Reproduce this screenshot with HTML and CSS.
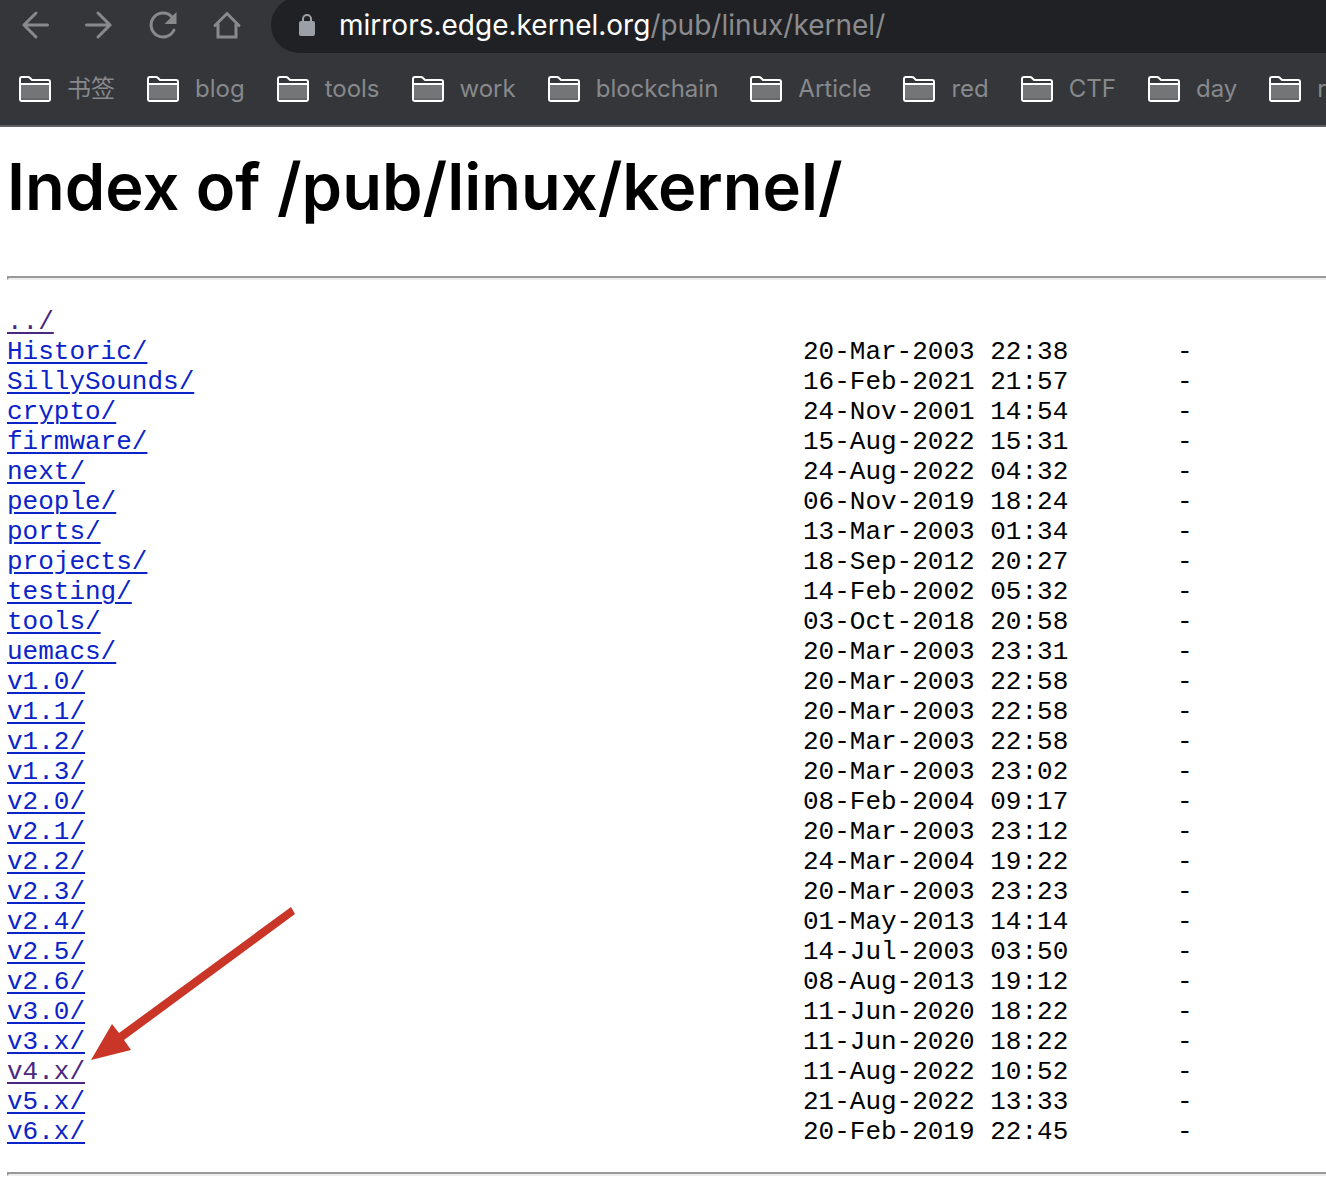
FILE: index.html
```html
<!DOCTYPE html>
<html lang="en">
<head>
<meta charset="utf-8">
<title>Index of /pub/linux/kernel/</title>
<link rel="stylesheet" href="styles.css">
</head>
<body>
<svg class="sprite" aria-hidden="true">
  <symbol id="folder" viewBox="0 0 32 26">
    <path d="M1 8V3Q1 1 3 1H9Q10 1 11 2L13 4H29Q31 4 31 6V8Z" fill="#35363a" stroke="#fff" stroke-width="2"/>
    <path d="M1 8H31V23Q31 25 29 25H3Q1 25 1 23Z" fill="#747577" stroke="#fff" stroke-width="2"/>
    <path d="M2 22H30V24H2Z" fill="#666769"/>
  </symbol>
</svg>
<header class="browser">
  <div class="toolbar">
    <nav class="controls" aria-label="Browser">
      <button class="control" type="button" aria-label="Back"><svg viewBox="0 0 32 32"><path d="M28.500 16H5M17 4L5 16L17 28"/></svg></button>
      <button class="control" type="button" aria-label="Forward"><svg viewBox="0 0 32 32"><path d="M3.500 16H27M15 4L27 16L15 28"/></svg></button>
      <button class="control" type="button" aria-label="Reload"><svg viewBox="0 0 32 32"><path d="M27 21A12 12 0 1 1 25 8"/><path class="solid" d="M29.500 3V15H17.500Z"/></svg></button>
      <button class="control" type="button" aria-label="Home"><svg viewBox="0 0 32 32"><path d="M4 16.500L16 4.500L28 16.500M7 15V28H25V15"/></svg></button>
    </nav>
    <div class="omnibox">
      <svg class="lock" viewBox="0 0 16 22" aria-hidden="true"><rect y="7" width="16" height="15" rx="2"/><path d="M4 8V5A4 4 0 0 1 12 5V8"/></svg>
      <div class="url" role="textbox" contenteditable="true" spellcheck="false" aria-label="Address">mirrors.edge.kernel.org<span class="path">/pub/linux/kernel/</span></div>
    </div>
  </div>
  <nav class="bookmarks" aria-label="Bookmarks">
    <a class="bookmark" href="#"><svg><use href="#folder"/></svg>书签</a>
    <a class="bookmark" href="#"><svg><use href="#folder"/></svg>blog</a>
    <a class="bookmark" href="#"><svg><use href="#folder"/></svg>tools</a>
    <a class="bookmark" href="#"><svg><use href="#folder"/></svg>work</a>
    <a class="bookmark" href="#"><svg><use href="#folder"/></svg>blockchain</a>
    <a class="bookmark" href="#"><svg><use href="#folder"/></svg>Article</a>
    <a class="bookmark" href="#"><svg><use href="#folder"/></svg>red</a>
    <a class="bookmark" href="#"><svg><use href="#folder"/></svg>CTF</a>
    <a class="bookmark" href="#"><svg><use href="#folder"/></svg>day</a>
    <a class="bookmark" href="#"><svg><use href="#folder"/></svg>r</a>
  </nav>
</header>
<main class="page">
  <h1>Index of /pub/linux/kernel/</h1>
  <hr>
  <div class="listing">
    <table>
      <colgroup><col class="name"><col class="date"><col></colgroup>
      <tbody>
        <tr><td><a class="visited" href="#">../</a></td><td></td><td></td></tr>
        <tr><td><a href="#">Historic/</a></td><td>20-Mar-2003 22:38</td><td>-</td></tr>
        <tr><td><a href="#">SillySounds/</a></td><td>16-Feb-2021 21:57</td><td>-</td></tr>
        <tr><td><a href="#">crypto/</a></td><td>24-Nov-2001 14:54</td><td>-</td></tr>
        <tr><td><a href="#">firmware/</a></td><td>15-Aug-2022 15:31</td><td>-</td></tr>
        <tr><td><a href="#">next/</a></td><td>24-Aug-2022 04:32</td><td>-</td></tr>
        <tr><td><a href="#">people/</a></td><td>06-Nov-2019 18:24</td><td>-</td></tr>
        <tr><td><a href="#">ports/</a></td><td>13-Mar-2003 01:34</td><td>-</td></tr>
        <tr><td><a href="#">projects/</a></td><td>18-Sep-2012 20:27</td><td>-</td></tr>
        <tr><td><a href="#">testing/</a></td><td>14-Feb-2002 05:32</td><td>-</td></tr>
        <tr><td><a href="#">tools/</a></td><td>03-Oct-2018 20:58</td><td>-</td></tr>
        <tr><td><a href="#">uemacs/</a></td><td>20-Mar-2003 23:31</td><td>-</td></tr>
        <tr><td><a href="#">v1.0/</a></td><td>20-Mar-2003 22:58</td><td>-</td></tr>
        <tr><td><a href="#">v1.1/</a></td><td>20-Mar-2003 22:58</td><td>-</td></tr>
        <tr><td><a href="#">v1.2/</a></td><td>20-Mar-2003 22:58</td><td>-</td></tr>
        <tr><td><a href="#">v1.3/</a></td><td>20-Mar-2003 23:02</td><td>-</td></tr>
        <tr><td><a href="#">v2.0/</a></td><td>08-Feb-2004 09:17</td><td>-</td></tr>
        <tr><td><a href="#">v2.1/</a></td><td>20-Mar-2003 23:12</td><td>-</td></tr>
        <tr><td><a href="#">v2.2/</a></td><td>24-Mar-2004 19:22</td><td>-</td></tr>
        <tr><td><a href="#">v2.3/</a></td><td>20-Mar-2003 23:23</td><td>-</td></tr>
        <tr><td><a href="#">v2.4/</a></td><td>01-May-2013 14:14</td><td>-</td></tr>
        <tr><td><a href="#">v2.5/</a></td><td>14-Jul-2003 03:50</td><td>-</td></tr>
        <tr><td><a href="#">v2.6/</a></td><td>08-Aug-2013 19:12</td><td>-</td></tr>
        <tr><td><a href="#">v3.0/</a></td><td>11-Jun-2020 18:22</td><td>-</td></tr>
        <tr><td><a href="#">v3.x/</a></td><td>11-Jun-2020 18:22</td><td>-</td></tr>
        <tr><td><a class="visited" href="#">v4.x/</a></td><td>11-Aug-2022 10:52</td><td>-</td></tr>
        <tr><td><a href="#">v5.x/</a></td><td>21-Aug-2022 13:33</td><td>-</td></tr>
        <tr><td><a href="#">v6.x/</a></td><td>20-Feb-2019 22:45</td><td>-</td></tr>
      </tbody>
    </table>
    <svg class="arrow" viewBox="0 0 206 154" aria-hidden="true"><path d="M0 153L21 117L28 126L200 0L204 7L33 133L40 143Z"/></svg>
  </div>
  <hr>
</main>
</body>
</html>
```

FILE: styles.css
```css
* {
  box-sizing: border-box;
}

body {
  margin: 0;
  background: #fff;
  color: #000;
  font-family: Inter, "Noto Sans CJK SC", sans-serif;
  overflow-x: hidden;
}

.sprite {
  display: none;
}

.browser {
  background: #35363a;
  border-bottom: 2px solid #606062;
  overflow: hidden;
}

.toolbar {
  display: flex;
  height: 53px;
}

.controls {
  display: flex;
  flex: none;
  gap: 32px;
  padding: 0 28px 4px 19px;
  align-items: center;
}

.control {
  width: 32px;
  height: 32px;
  padding: 0;
  border: 0;
  background: none;
}

.control svg {
  display: block;
  width: 32px;
  height: 32px;
  fill: none;
  stroke: #88898b;
  stroke-width: 3;
  stroke-linecap: round;
}

.control .solid {
  fill: #88898b;
  stroke: none;
}

.omnibox {
  display: flex;
  flex: 1;
  gap: 24px;
  align-items: center;
  height: 56px;
  margin-top: -3px;
  padding-left: 28px;
  border-radius: 28px 0 0 28px;
  background: #202124;
}

.lock {
  width: 16px;
  height: 22px;
  fill: #9aa0a6;
}

.lock path {
  fill: none;
  stroke: #9aa0a6;
  stroke-width: 2;
}

.url {
  color: #fff;
  font-size: 28px;
  line-height: 32px;
  white-space: nowrap;
  outline: 0;
}

.path {
  color: #8b8c8f;
}

.bookmarks {
  display: flex;
  gap: 32px;
  height: 72px;
  padding-left: 19px;
  align-items: center;
}

.bookmark {
  display: flex;
  flex: none;
  gap: 16px;
  align-items: center;
  color: #87898c;
  font-size: 24px;
  line-height: 32px;
  text-decoration: none;
}

.bookmark svg {
  width: 32px;
  height: 26px;
}

.page {
  padding-left: 7px;
}

h1 {
  margin: 0;
  padding: 20px 0 49px;
  font-size: 65px;
  font-weight: 600;
  line-height: 80px;
  white-space: nowrap;
}

hr {
  height: 4px;
  margin: 0;
  border: 2px solid;
  border-color: #999 #eee #eee #999;
  border-right: 0;
}

.listing {
  position: relative;
  padding: 27px 0 25px;
}

table {
  width: 100%;
  table-layout: fixed;
  border-collapse: collapse;
  font-family: "Liberation Mono", monospace;
  font-size: 26px;
  line-height: 30px;
}

td {
  padding: 0;
  white-space: nowrap;
}

.name {
  width: 796px;
}

.date {
  width: 374px;
}

td a {
  color: #0b24c8;
  text-decoration-thickness: 2px;
  text-underline-offset: 3px;
}

td .visited {
  color: #4b2780;
}

.arrow {
  position: absolute;
  left: 84px;
  bottom: 111px;
  width: 206px;
  height: 154px;
  fill: #c93526;
}
```
